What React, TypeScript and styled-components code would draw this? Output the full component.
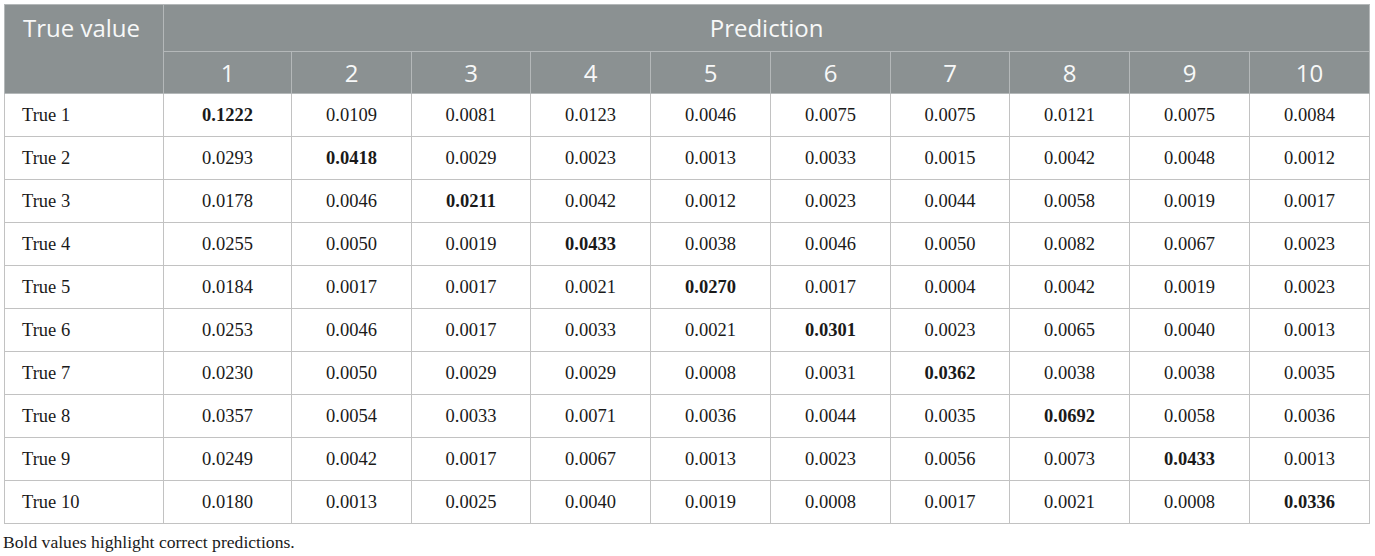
import React from "react";
import styled, { createGlobalStyle } from "styled-components";

const Global = createGlobalStyle`
  html, body { margin: 0; padding: 0; background: #ffffff; }
  body { padding: 4px 0 0 4px; }
`;

const Wrap = styled.div`
  display: flex;
  flex-direction: column;
  width: 1365px;
`;

const Table = styled.table`
  border-collapse: collapse;
  table-layout: fixed;
  width: 1365px;
  border: 1px solid #c2c2c2;
`;

const HeadCell = styled.th<{ $align?: string; $valign?: string }>`
  background: #8b9192;
  color: #f7f8f8;
  font-family: "Open Sans", Lato, sans-serif;
  font-weight: 400;
  font-size: 24px;
  text-align: ${(p) => p.$align || "center"};
  vertical-align: ${(p) => p.$valign || "middle"};
  border: 1px solid #b4b8b9;
  padding: 0 18px;
  line-height: 1;
`;

const FirstHead = styled(HeadCell)`
  padding-top: 11px;
`;

const HeadRow = styled.tr<{ $h: number }>`
  height: ${(p) => p.$h}px;
`;

const BodyRow = styled.tr`
  height: 43px;
`;

const Cell = styled.td<{ $bold?: boolean; $left?: boolean }>`
  font-family: "Liberation Serif", "Times New Roman", serif;
  font-size: 18.5px;
  font-weight: ${(p) => (p.$bold ? 700 : 400)};
  color: #1a1a1a;
  text-align: ${(p) => (p.$left ? "left" : "center")};
  padding: 0 0 0 ${(p) => (p.$left ? "17px" : "0")};
  border: 1px solid #c2c2c2;
`;

const Note = styled.div`
  font-family: "Liberation Serif", "Times New Roman", serif;
  font-size: 17.6px;
  color: #1a1a1a;
  margin: 8px 0 0 -1px;
  line-height: 20px;
`;

const widths = [159, 128, 120, 119, 120, 120, 120, 119, 120, 120, 120];

const data: string[][] = [
  ["0.1222", "0.0109", "0.0081", "0.0123", "0.0046", "0.0075", "0.0075", "0.0121", "0.0075", "0.0084"],
  ["0.0293", "0.0418", "0.0029", "0.0023", "0.0013", "0.0033", "0.0015", "0.0042", "0.0048", "0.0012"],
  ["0.0178", "0.0046", "0.0211", "0.0042", "0.0012", "0.0023", "0.0044", "0.0058", "0.0019", "0.0017"],
  ["0.0255", "0.0050", "0.0019", "0.0433", "0.0038", "0.0046", "0.0050", "0.0082", "0.0067", "0.0023"],
  ["0.0184", "0.0017", "0.0017", "0.0021", "0.0270", "0.0017", "0.0004", "0.0042", "0.0019", "0.0023"],
  ["0.0253", "0.0046", "0.0017", "0.0033", "0.0021", "0.0301", "0.0023", "0.0065", "0.0040", "0.0013"],
  ["0.0230", "0.0050", "0.0029", "0.0029", "0.0008", "0.0031", "0.0362", "0.0038", "0.0038", "0.0035"],
  ["0.0357", "0.0054", "0.0033", "0.0071", "0.0036", "0.0044", "0.0035", "0.0692", "0.0058", "0.0036"],
  ["0.0249", "0.0042", "0.0017", "0.0067", "0.0013", "0.0023", "0.0056", "0.0073", "0.0433", "0.0013"],
  ["0.0180", "0.0013", "0.0025", "0.0040", "0.0019", "0.0008", "0.0017", "0.0021", "0.0008", "0.0336"],
];

export default function App() {
  return (
    <>
      <Global />
      <Wrap>
        <Table>
          <colgroup>
            {widths.map((w, i) => (
              <col key={i} style={{ width: w }} />
            ))}
          </colgroup>
          <thead>
            <HeadRow $h={47}>
              <FirstHead rowSpan={2} $align="left" $valign="top">
                True value
              </FirstHead>
              <HeadCell colSpan={10}>Prediction</HeadCell>
            </HeadRow>
            <HeadRow $h={42}>
              {Array.from({ length: 10 }, (_, i) => (
                <HeadCell key={i}>{i + 1}</HeadCell>
              ))}
            </HeadRow>
          </thead>
          <tbody>
            {data.map((row, r) => (
              <BodyRow key={r}>
                <Cell $left>True {r + 1}</Cell>
                {row.map((v, c) => (
                  <Cell key={c} $bold={c === r}>
                    {v}
                  </Cell>
                ))}
              </BodyRow>
            ))}
          </tbody>
        </Table>
        <Note>Bold values highlight correct predictions.</Note>
      </Wrap>
    </>
  );
}
